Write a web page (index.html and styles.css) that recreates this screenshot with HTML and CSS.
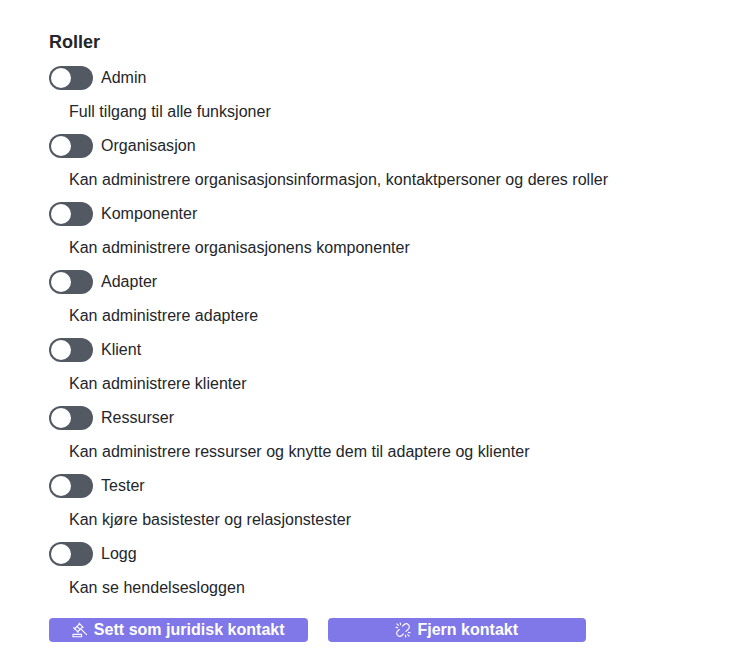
FILE: index.html
```html
<!DOCTYPE html>
<html lang="nb">
<head>
<meta charset="utf-8">
<title>Roller</title>
<link rel="stylesheet" href="styles.css">
</head>
<body>
<main class="panel">
  <h2 class="heading">Roller</h2>
  <div class="roles">
    <label class="role"><input class="switch" type="checkbox"><span>Admin</span></label>
    <p class="description">Full tilgang til alle funksjoner</p>
    <label class="role"><input class="switch" type="checkbox"><span>Organisasjon</span></label>
    <p class="description">Kan administrere organisasjonsinformasjon, kontaktpersoner og deres roller</p>
    <label class="role"><input class="switch" type="checkbox"><span>Komponenter</span></label>
    <p class="description">Kan administrere organisasjonens komponenter</p>
    <label class="role"><input class="switch" type="checkbox"><span>Adapter</span></label>
    <p class="description">Kan administrere adaptere</p>
    <label class="role"><input class="switch" type="checkbox"><span>Klient</span></label>
    <p class="description">Kan administrere klienter</p>
    <label class="role"><input class="switch" type="checkbox"><span>Ressurser</span></label>
    <p class="description">Kan administrere ressurser og knytte dem til adaptere og klienter</p>
    <label class="role"><input class="switch" type="checkbox"><span>Tester</span></label>
    <p class="description">Kan kjøre basistester og relasjonstester</p>
    <label class="role"><input class="switch" type="checkbox"><span>Logg</span></label>
    <p class="description">Kan se hendelsesloggen</p>
  </div>
  <div class="actions">
    <button class="button" type="button">
      <svg class="icon" viewBox="0 0 16 16" aria-hidden="true"><path d="M7 1.2 11.2 5.4M1.6 5.6 6.2 10.2M7.6 1.8 2.4 7M10.6 4.8 5.4 10M5 4.4 8 7.4M8.8 6.8 14.6 12.6M1 12.4H9.6V14.7H1Z"/></svg>
      <span>Sett som juridisk kontakt</span>
    </button>
    <button class="button" type="button">
      <svg class="icon" viewBox="0 0 16 16" aria-hidden="true"><path d="M7.5 4.2 9.2 2.5A3.05 3.05 0 0 1 13.5 6.8L11 9.3M8.5 11.8 6.8 13.5A3.05 3.05 0 0 1 2.5 9.2L4.2 7.5M5.2 1 5.6 2.7M.9 5.2 2.6 5.6M10.4 13.3 10.8 15M13.4 10.4 15.1 10.8M1.9 1.9 3.4 3.4M12.6 12.6 14.1 14.1"/></svg>
      <span>Fjern kontakt</span>
    </button>
  </div>
</main>
</body>
</html>
```
FILE: styles.css
```css
* {
  box-sizing: border-box;
}

body {
  margin: 0;
  background: #fff;
  color: #23262a;
  font: 16px/24px "Liberation Sans", Arial, sans-serif;
}

.panel {
  padding: 30px 49px 0;
}

.heading {
  margin: 0 0 12px;
  font-size: 18px;
  line-height: 24px;
}

.roles {
  display: flex;
  flex-direction: column;
  align-items: flex-start;
  gap: 10px;
  letter-spacing: 0.025px;
}

.role {
  display: flex;
  align-items: center;
  gap: 8px;
}

.description {
  margin: 0 0 0 20px;
}

.switch {
  appearance: none;
  width: 44px;
  height: 24px;
  margin: 0;
  padding: 2px;
  border-radius: 12px;
  background: #525962;
}

.switch::before {
  content: "";
  display: block;
  width: 20px;
  height: 20px;
  border-radius: 50%;
  background: #fff;
}

.switch:checked::before {
  margin-left: 20px;
}

.actions {
  display: flex;
  gap: 20px;
  margin-top: 18px;
}

.button {
  display: flex;
  align-items: center;
  justify-content: center;
  gap: 6px;
  width: 258.5px;
  height: 24px;
  padding: 0;
  border: 0;
  border-radius: 4px;
  background: #8078e8;
  color: #fff;
  font: bold 16px/24px "Liberation Sans", Arial, sans-serif;
  letter-spacing: 0.02px;
}

.icon {
  width: 16px;
  height: 16px;
  fill: none;
  stroke: currentColor;
  stroke-width: 1.1;
  stroke-linecap: round;
  stroke-linejoin: round;
}
```
